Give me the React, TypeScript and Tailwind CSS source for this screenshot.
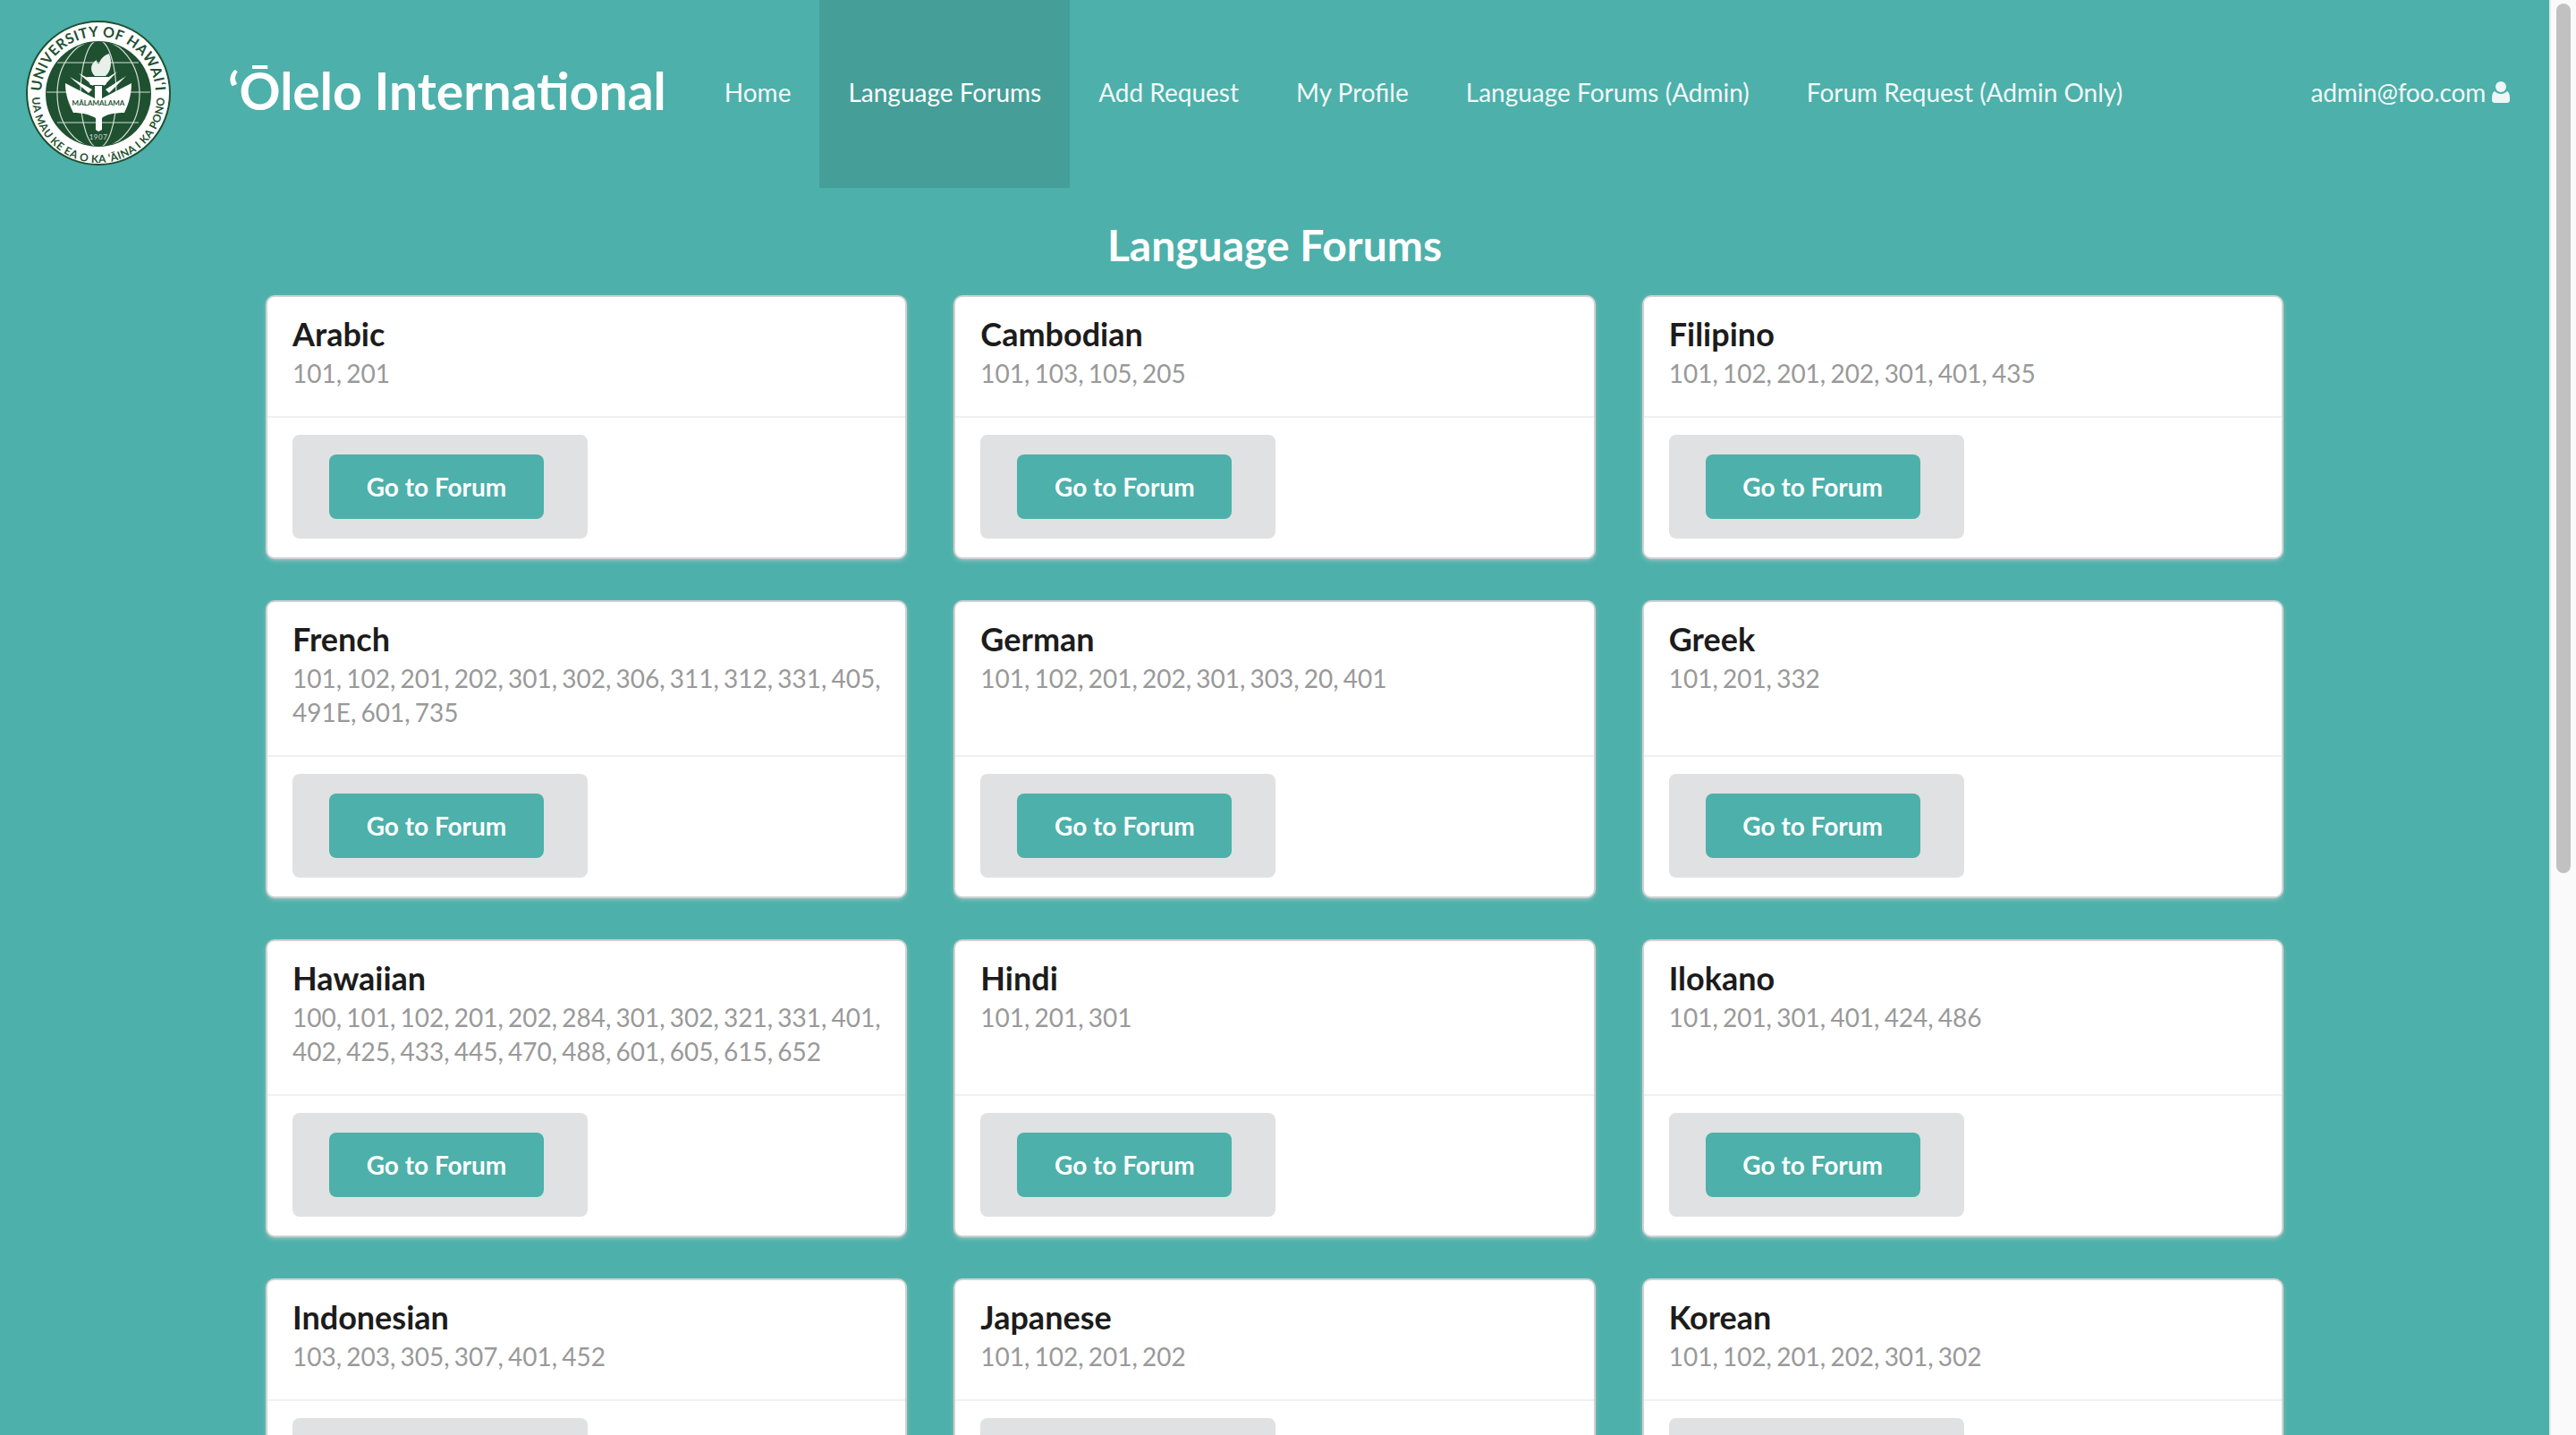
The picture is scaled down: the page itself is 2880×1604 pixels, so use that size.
const forums = [
  { name: "Arabic", levels: "101, 201" },
  { name: "Cambodian", levels: "101, 103, 105, 205" },
  { name: "Filipino", levels: "101, 102, 201, 202, 301, 401, 435" },
  { name: "French", levels: "101, 102, 201, 202, 301, 302, 306, 311, 312, 331, 405, 491E, 601, 735" },
  { name: "German", levels: "101, 102, 201, 202, 301, 303, 20, 401" },
  { name: "Greek", levels: "101, 201, 332" },
  { name: "Hawaiian", levels: "100, 101, 102, 201, 202, 284, 301, 302, 321, 331, 401, 402, 425, 433, 445, 470, 488, 601, 605, 615, 652" },
  { name: "Hindi", levels: "101, 201, 301" },
  { name: "Ilokano", levels: "101, 201, 301, 401, 424, 486" },
  { name: "Indonesian", levels: "103, 203, 305, 307, 401, 452" },
  { name: "Japanese", levels: "101, 102, 201, 202" },
  { name: "Korean", levels: "101, 102, 201, 202, 301, 302" },
];

const navItems = ["Home", "Language Forums", "Add Request", "My Profile", "Language Forums (Admin)", "Forum Request (Admin Only)"];

const Seal = () => (
  <svg viewBox="0 0 220 210" className="h-[210px] w-[220px] shrink-0">
    <defs>
      <path id="seal-top" d="M 49.9 126.9 A 64 64 0 1 1 170.1 126.9" />
      <path id="seal-bottom" d="M 36 108 A 74 74 0 0 0 184 108" />
      <clipPath id="seal-globe">
        <circle cx="110" cy="105" r="58" />
      </clipPath>
    </defs>
    <circle cx="110" cy="104" r="80" fill="#ffffff" stroke="#1f5131" strokeWidth="2" />
    <circle cx="110" cy="105" r="59" fill="#1f5131" />
    <text fontFamily="Lato, sans-serif" fontWeight="700" fontSize="16" fill="#1f5131" letterSpacing="0.5">
      <textPath href="#seal-top" startOffset="50%" textAnchor="middle">UNIVERSITY OF HAWAI‘I</textPath>
    </text>
    <text fontFamily="Lato, sans-serif" fontWeight="700" fontSize="12" fill="#1f5131" letterSpacing="0.5">
      <textPath href="#seal-bottom" startOffset="50%" textAnchor="middle">UA MAU KE EA O KA ‘ĀINA I KA PONO</textPath>
    </text>
    <g clipPath="url(#seal-globe)" fill="none" stroke="#d5dfd8" strokeWidth="1.2">
      <ellipse cx="110" cy="105" rx="46" ry="60" />
      <ellipse cx="110" cy="105" rx="20" ry="60" />
      <path d="M 64 70 H 155 M 52 103 H 85 M 135 103 H 168 M 64 137 H 155" />
    </g>
    {/* flame */}
    <path d="M 122 60 C 126 69 124 80 118 85 H 106 C 100 79 101 71 108 67 C 108 71 110 72 111 71 C 112 66 116 62 122 60 Z" fill="#e9efeb" />
    <path d="M 97 86 H 122 L 118 95 H 101 Z" fill="#ffffff" />
    {/* leaves */}
    <path d="M 78 86 L 103 100 L 99 104 Z M 88 82 L 104 96 L 106 91 Z" fill="#ffffff" />
    <path d="M 141 85 L 118 100 L 122 104 Z M 131 80 L 116 96 L 114 91 Z" fill="#ffffff" />
    {/* book and handle */}
    <path d="M 73 93 L 106 110 V 96 H 114 V 110 L 147 93 C 147 107 143 118 139 126 C 128 126 118 128 114 132 V 145 L 110 147 L 107 145 V 132 C 100 128 92 126 82 126 C 77 116 73 106 73 93 Z" fill="#ffffff" />
    <text x="110" y="118" textAnchor="middle" fontFamily="Lato, sans-serif" fontWeight="700" fontSize="8" fill="#1f5131">MĀLAMALAMA</text>
    <text x="110" y="156" textAnchor="middle" fontFamily="Lato, sans-serif" fontSize="8" fill="#d5dfd8" letterSpacing="0.5">1907</text>
  </svg>
);

const UserIcon = () => (
  <svg viewBox="0 0 20 24" className="ml-[7px] h-[24px] w-[20px] fill-[#eef7f6]">
    <circle cx="10" cy="6" r="6" />
    <path d="M 3 11 C 5 13 7.5 14 10 14 C 12.5 14 15 13 17 11 C 19 12 20 14.5 20 19 V 21 C 20 23 18.5 24 17 24 H 3 C 1.5 24 0 23 0 21 V 19 C 0 14.5 1 12 3 11 Z" />
  </svg>
);

const ForumCard = ({ name, levels }: { name: string; levels: string }) => (
  <div className="flex flex-col rounded-lg bg-white shadow-[0_2px_6px_0_#c9cfcf,0_0_0_2px_#d4d4d5]">
    <div className="flex-1 pt-[18px] pr-[20px] pb-[29px] pl-[28px]">
      <h3 className="mb-[2px] text-[36px] leading-[46px] font-bold text-[#1c1c1c]">{name}</h3>
      <p className="text-[28px] leading-[38px] text-[#999999] [word-spacing:-2px]">{levels}</p>
    </div>
    <div className="border-t-2 border-[#f0f0f1] px-[28px] pt-[19px] pb-[21px]">
      <div className="w-[330px] rounded-lg bg-[#e0e1e2] px-[41px] py-[22px]">
        <button className="h-[72px] w-[240px] rounded-lg bg-[#4db0aa] text-[28px] font-bold text-white">Go to Forum</button>
      </div>
    </div>
  </div>
);

export default function App() {
  return (
    <div className="flex h-[1604px] overflow-hidden bg-[#4db0aa] font-['Lato',sans-serif]">
      <div className="min-w-0 flex-1">
        <nav className="flex h-[210px] items-stretch text-[28px] text-[#f1f9f8]">
          <Seal />
          <div className="flex items-center pr-[33px] pb-[6px] pl-[35px] text-[57px] font-bold text-white">‘Ōlelo International</div>
          {navItems.map((item) => (
            <a key={item} className={item === "Language Forums" ? "flex items-center bg-[#459e98] px-[32px] pb-[4px] text-white" : "flex items-center px-[32px] pb-[4px]"}>
              {item}
            </a>
          ))}
          <div className="ml-auto flex items-center pr-[44px] pb-[4px] tracking-[-0.2px]">
            admin@foo.com
            <UserIcon />
          </div>
        </nav>
        <h1 className="pt-[32px] pb-[26px] text-center text-[48px] leading-[64px] font-bold text-white">Language Forums</h1>
        <div className="mx-auto grid w-[2252px] grid-cols-3 gap-x-[56px] gap-y-[50px]">
          {forums.map((forum) => (
            <ForumCard key={forum.name} {...forum} />
          ))}
        </div>
      </div>
      <aside className="w-[30px] shrink-0 border-l-2 border-[#e8e8e8] bg-[#fafafa] pt-[4px] pl-[6px]">
        <div className="h-[972px] w-[16px] rounded-full bg-[#c1c1c1]" />
      </aside>
    </div>
  );
}
